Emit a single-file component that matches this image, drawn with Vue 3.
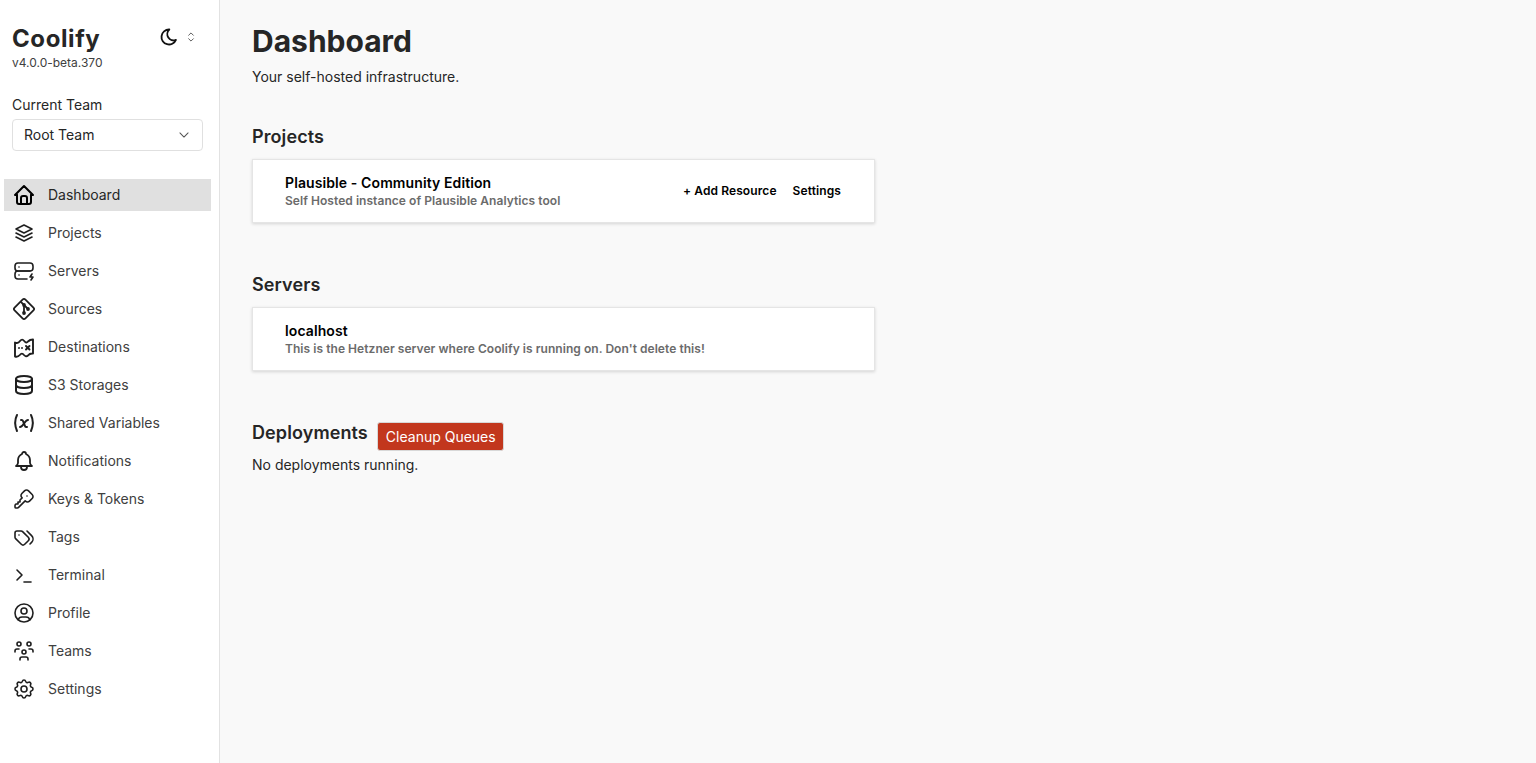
<script setup>
const nav = [
  { label: 'Dashboard', active: true, w: 2, paths: ['M5 12H3l9-9l9 9h-2', 'M5 12v7a2 2 0 0 0 2 2h10a2 2 0 0 0 2-2v-7', 'M9 21v-6a2 2 0 0 1 2-2h2a2 2 0 0 1 2 2v6'] },
  { label: 'Projects', paths: ['M12 4L4 8l8 4l8-4l-8-4', 'M4 12l8 4l8-4', 'M4 16l8 4l8-4'] },
  { label: 'Servers', paths: ['M3 7a3 3 0 0 1 3-3h12a3 3 0 0 1 3 3v2a3 3 0 0 1-3 3H6a3 3 0 0 1-3-3z', 'M15 20H6a3 3 0 0 1-3-3v-2a3 3 0 0 1 3-3h12', 'M7 8v.01', 'M7 16v.01', 'M20 15l-2 3h3l-2 3'] },
  { label: 'Sources', w: 1.8, paths: ['M15 12a1 1 0 1 0 2 0a1 1 0 1 0-2 0', 'M11 8a1 1 0 1 0 2 0a1 1 0 1 0-2 0', 'M11 16a1 1 0 1 0 2 0a1 1 0 1 0-2 0', 'M12 15V9', 'M15 11l-2-2', 'M11 7L9.1 5.1', 'M13.446 2.6l7.955 7.954a2.045 2.045 0 0 1 0 2.892l-7.955 7.955a2.045 2.045 0 0 1-2.892 0l-7.955-7.955a2.045 2.045 0 0 1 0-2.892l7.955-7.955a2.045 2.045 0 0 1 2.892 0z'] },
  { label: 'Destinations', w: 1.9, paths: ['M3 7.500c2.200 1 3.600.6 5-1.500c1.500-1.800 2.800-1.800 4.200 0c1.300 1.700 2.600 2 3.800.5c1.300-1.400 3-2 5-2v14c-2.200-.3-3.700.3-5 2c-1.400 1.300-2.700 1-4-.5c-1.400-1.800-2.800-1.800-4.200 0c-1.300 1.500-3 2-4.800 1.500z', 'M7 13h.01', 'M10 13h.01', 'M14 11l3.500 3.500', 'M17.500 11L14 14.500'] },
  { label: 'S3 Storages', w: 2, paths: ['M4 6a8 3 0 1 0 16 0a8 3 0 1 0-16 0', 'M4 6v6a8 3 0 0 0 16 0V6', 'M4 12v6a8 3 0 0 0 16 0v-6'] },
  { label: 'Shared Variables', w: 2, paths: ['M5 4c-2.500 5-2.500 10 0 16', 'M19 4c2.500 5 2.500 10 0 16', 'M9 9h1c1 0 1 1 2.016 3.527C13 15 13 16 14 16h1', 'M8 16c1.500 0 3-2 4-3.500S14.500 9 16 9'] },
  { label: 'Notifications', w: 1.8, paths: ['M10 5a2 2 0 1 1 4 0a7 7 0 0 1 4 6v3a4 4 0 0 0 2 3H4a4 4 0 0 0 2-3v-3a7 7 0 0 1 4-6', 'M9 17v1a3 3 0 0 0 6 0v-1'] },
  { label: 'Keys & Tokens', paths: ['M16.555 3.843l3.602 3.602a2.877 2.877 0 0 1 0 4.069l-2.643 2.643a2.877 2.877 0 0 1-4.069 0l-.301-.301l-6.558 6.558a2 2 0 0 1-1.239.578l-.175.008H4.000a1 1 0 0 1-.993-.883L3 20.000v-1.172a2 2 0 0 1 .467-1.284l.119-.13l.414-.414h2v-2h2v-2l2.144-2.144l-.301-.301a2.877 2.877 0 0 1 0-4.069l2.643-2.643a2.877 2.877 0 0 1 4.069 0z', 'M15 9h.01'] },
  { label: 'Tags', paths: ['M3 8v4.172a2 2 0 0 0 .586 1.414l5.710 5.710a2.410 2.410 0 0 0 3.408 0l3.592-3.592a2.410 2.410 0 0 0 0-3.408l-5.710-5.710A2 2 0 0 0 9.172 6H5a2 2 0 0 0-2 2z', 'M18 19l1.592-1.592a4.820 4.820 0 0 0 0-6.816L15 6', 'M7 10h-.01'] },
  { label: 'Terminal', paths: ['M5 7l5 5l-5 5', 'M12 19h7'] },
  { label: 'Profile', paths: ['M3 12a9 9 0 1 0 18 0a9 9 0 1 0-18 0', 'M9 10a3 3 0 1 0 6 0a3 3 0 1 0-6 0', 'M6.168 18.849A4 4 0 0 1 10 16h4a4 4 0 0 1 3.834 2.855'] },
  { label: 'Teams', paths: ['M10 13a2 2 0 1 0 4 0a2 2 0 0 0-4 0', 'M8 21v-1a2 2 0 0 1 2-2h4a2 2 0 0 1 2 2v1', 'M15 5a2 2 0 1 0 4 0a2 2 0 0 0-4 0', 'M17 10h2a2 2 0 0 1 2 2v1', 'M5 5a2 2 0 1 0 4 0a2 2 0 0 0-4 0', 'M3 13v-1a2 2 0 0 1 2-2h2'] },
  { label: 'Settings', paths: ['M10.325 4.317c.426-1.756 2.924-1.756 3.350 0a1.724 1.724 0 0 0 2.573 1.066c1.543-.94 3.310.826 2.370 2.370a1.724 1.724 0 0 0 1.065 2.572c1.756.426 1.756 2.924 0 3.350a1.724 1.724 0 0 0-1.066 2.573c.94 1.543-.826 3.310-2.370 2.370a1.724 1.724 0 0 0-2.572 1.065c-.426 1.756-2.924 1.756-3.350 0a1.724 1.724 0 0 0-2.573-1.066c-1.543.94-3.310-.826-2.370-2.370a1.724 1.724 0 0 0-1.065-2.572c-1.756-.426-1.756-2.924 0-3.350a1.724 1.724 0 0 0 1.066-2.573c-.94-1.543.826-3.310 2.370-2.370c1 .608 2.296.07 2.572-1.065z', 'M9 12a3 3 0 1 0 6 0a3 3 0 0 0-6 0'] },
]
</script>

<template>
  <div class="app">
    <aside class="sidebar">
      <div class="brand">
        <div>
          <div class="logo">Coolify</div>
          <div class="version">v4.0.0-beta.370</div>
        </div>
        <div class="theme">
          <svg class="moon" viewBox="0 0 24 24" fill="none" stroke="currentColor" stroke-width="2.200" stroke-linecap="round" stroke-linejoin="round"><path d="M12 3c.132 0 .263 0 .393 0a7.500 7.500 0 0 0 7.920 12.446a9 9 0 1 1-8.313-12.454z" /></svg>
          <svg class="updown" viewBox="0 0 24 24" fill="none" stroke="currentColor" stroke-width="1.600" stroke-linecap="round" stroke-linejoin="round"><path d="M8 9l4-4l4 4" /><path d="M16 15l-4 4l-4-4" /></svg>
        </div>
      </div>
      <div class="team">
        <div class="team-label">Current Team</div>
        <div class="select">
          <span class="select-text">Root Team</span>
          <svg class="chev" viewBox="0 0 24 24" fill="none" stroke="currentColor" stroke-width="1.800" stroke-linecap="round" stroke-linejoin="round"><path d="M5 8.500l7 7l7-7" /></svg>
        </div>
      </div>
      <nav class="nav">
        <a v-for="item in nav" :key="item.label" class="nav-item" :class="{ active: item.active }">
          <svg class="icon" viewBox="0 0 24 24" fill="none" stroke="currentColor" :stroke-width="item.w || 1.600" stroke-linecap="round" stroke-linejoin="round">
            <path v-for="d in item.paths" :key="d" :d="d" />
          </svg>
          <span class="nav-label">{{ item.label }}</span>
        </a>
      </nav>
    </aside>
    <main class="main">
      <h1>Dashboard</h1>
      <p class="sub">Your self-hosted infrastructure.</p>

      <h2 class="section-title">Projects</h2>
      <div class="card">
        <div>
          <div class="card-title">Plausible - Community Edition</div>
          <div class="card-desc">Self Hosted instance of Plausible Analytics tool</div>
        </div>
        <div class="actions">
          <a>+ Add Resource</a>
          <a>Settings</a>
        </div>
      </div>

      <h2 class="section-title servers">Servers</h2>
      <div class="card">
        <div>
          <div class="card-title">localhost</div>
          <div class="card-desc">This is the Hetzner server where Coolify is running on. Don't delete this!</div>
        </div>
      </div>

      <div class="deploy-head">
        <h2>Deployments</h2>
        <button class="danger" type="button">Cleanup Queues</button>
      </div>
      <p class="none">No deployments running.</p>
    </main>
  </div>
</template>

<style scoped>
.app {
  display: flex;
  min-height: 763px;
  font-family: Inter, "Liberation Sans", sans-serif;
  color: #262626;
  font-size: 14px;
  background: #f9f9f9;
}
.sidebar {
  width: 219px;
  flex: none;
  background: #fff;
  border-right: 1px solid #e2e2e2;
  box-sizing: content-box;
}
.brand {
  display: flex;
  justify-content: space-between;
  padding: 24px 21px 0 12px;
}
.logo {
  font-size: 24px;
  line-height: 30px;
  font-weight: 700;
  letter-spacing: 0.6px;
  color: #262626;
}
.version {
  font-size: 12px;
  line-height: 16px;
  margin-top: 1px;
  color: #404040;
}
.theme {
  display: flex;
  align-items: center;
  height: 26px;
  gap: 5px;
}
.moon {
  width: 20px;
  height: 20px;
  color: #111;
}
.updown {
  width: 14px;
  height: 14px;
  color: #555;
}
.team {
  padding: 24px 16px 0 12px;
}
.team-label {
  line-height: 20px;
  color: #262626;
}
.select {
  margin-top: 4px;
  height: 32px;
  box-sizing: border-box;
  border: 1px solid #e0e0e0;
  border-radius: 4px;
  display: flex;
  align-items: center;
  justify-content: space-between;
  padding: 0 11px;
  color: #262626;
  background: #fff;
}
.select-text,
.nav-label {
  margin-bottom: 2px;
}
.chev {
  width: 14px;
  height: 14px;
  color: #555;
}
.nav {
  margin-top: 28px;
  padding: 0 8px 0 4px;
  display: flex;
  flex-direction: column;
  gap: 6px;
}
.nav-item {
  display: flex;
  align-items: center;
  height: 32px;
  padding-left: 8px;
  gap: 12px;
  color: #404040;
}
.nav-item.active {
  background: #e0e0e0;
  color: #262626;
}
.icon {
  width: 24px;
  height: 24px;
  flex: none;
  color: #1f1f1f;
}
.active .icon {
  color: #000;
}
.main {
  flex: 1;
  padding: 23px 32px 0;
}
h1 {
  margin: 0;
  font-size: 30px;
  line-height: 36px;
  font-weight: 700;
  color: #262626;
}
.sub {
  margin: 8px 0 0;
  line-height: 20px;
  color: #262626;
}
h2 {
  margin: 0;
  font-size: 18px;
  line-height: 28px;
  font-weight: 600;
  letter-spacing: 0.1px;
  color: #262626;
}
.section-title {
  margin-top: 36px;
}
.section-title.servers {
  margin-top: 48px;
}
.card {
  margin-top: 8px;
  width: 623px;
  height: 64px;
  box-sizing: border-box;
  background: #fff;
  border: 1px solid #e5e5e5;
  box-shadow: 0 1px 3px rgba(0, 0, 0, 0.15);
  padding: 0 33px 0 32px;
  display: flex;
  align-items: center;
  justify-content: space-between;
  font-weight: 600;
}
.card-title {
  font-size: 14px;
  line-height: 18px;
  letter-spacing: 0.1px;
  color: #000;
}
.card-desc {
  font-size: 12px;
  line-height: 16px;
  margin-top: 1px;
  letter-spacing: 0.05px;
  color: #6b6b6b;
}
.actions {
  display: flex;
  gap: 16px;
  font-size: 12px;
  letter-spacing: 0.1px;
  margin-bottom: 2px;
  color: #000;
}
.deploy-head {
  margin-top: 48px;
  display: flex;
  align-items: flex-start;
  gap: 9px;
}
.danger {
  height: 29px;
  margin-top: 3px;
  padding: 0 7px 0 8px;
  border: 1px solid #d8d8d8;
  border-radius: 3px;
  background: #c2371d;
  color: #fff;
  font: inherit;
  font-size: 14px;
}
.none {
  margin: 4px 0 0;
  line-height: 20px;
  color: #262626;
}
</style>
